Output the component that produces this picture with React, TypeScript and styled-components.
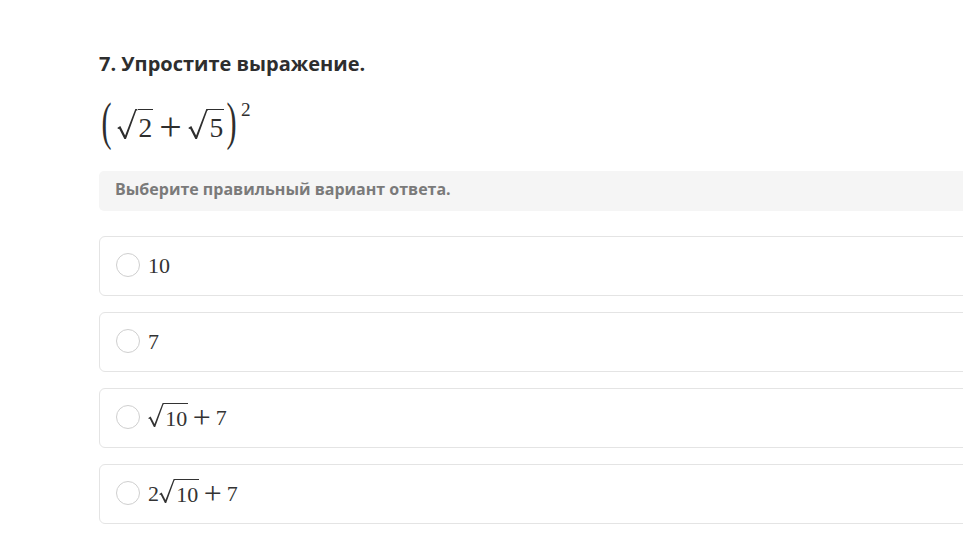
import React from 'react';
import styled, { createGlobalStyle } from 'styled-components';

const GlobalStyle = createGlobalStyle`
  html, body {
    margin: 0;
    padding: 0;
    background: #ffffff;
    overflow: hidden;
  }
  body {
    font-family: 'Open Sans', Lato, sans-serif;
    color: #333333;
  }
`;

// radical sign drawn as a shape, the bar over the radicand is a border
function Sqrt({ children }: { children: React.ReactNode }) {
  return (
    <SqrtWrap>
      <Radical viewBox="0 0 16 22" preserveAspectRatio="none">
        <path d="M0.4 13.6 L2.6 12.3 L6.4 19.2 L14.4 0 L16 0 L16 1.1 L15.2 1.1 L7.0 22 L5.9 22 L1.7 14.4 L0.7 14.6 Z" />
      </Radical>
      <Radicand>{children}</Radicand>
    </SqrtWrap>
  );
}

const App = () => {
  const answers: React.ReactNode[] = [
    <>10</>,
    <>7</>,
    <>
      <Sqrt>10</Sqrt>
      <Op>+</Op>7
    </>,
    <>
      2<Sqrt>10</Sqrt>
      <Op>+</Op>7
    </>,
  ];

  return (
    <>
      <GlobalStyle />
      <Page>
        <Title>7. Упростите выражение.</Title>
        <MathLine>
          <BigParen>(</BigParen>
          <Sqrt>2</Sqrt>
          <Op>+</Op>
          <Sqrt>5</Sqrt>
          <BigParen $right>)</BigParen>
          <Sup>2</Sup>
        </MathLine>
        <Hint>Выберите правильный вариант ответа.</Hint>
        <AnswerList>
          {answers.map((a, i) => (
            <AnswerCard key={i}>
              <Radio />
              <AnswerText>{a}</AnswerText>
            </AnswerCard>
          ))}
        </AnswerList>
      </Page>
    </>
  );
};

export default App;

const Page = styled.div`
  width: 900px;
  padding: 52px 0 0 99px;
`;

const Title = styled.h1`
  margin: 0;
  font-size: 20px;
  line-height: 24px;
  font-weight: 700;
  color: #2e2e2e;
`;

const MathLine = styled.div`
  margin-top: 24px;
  height: 50px;
  font-family: 'Liberation Serif', 'DejaVu Serif', serif;
  font-size: 27.5px;
  line-height: 1;
  color: #2e2e2e;
  white-space: nowrap;
`;

const BigParen = styled.span<{ $right?: boolean }>`
  display: inline-block;
  transform: translateY(-0.24em) scale(1.1, 1.9);
  margin: ${(p) => (p.$right ? '0 5px 0 3px' : '0 6px 0 3px')};
`;

const Op = styled.span`
  font-size: 1.45em;
  vertical-align: -0.08em;
  margin: 0 0.16em;
`;

const Sup = styled.span`
  font-size: 0.7em;
  vertical-align: 1.1em;
`;

const SqrtWrap = styled.span`
  display: inline-flex;
  align-items: flex-start;
`;

const Radical = styled.svg`
  width: 0.74em;
  height: 1.1em;
  fill: currentColor;
  flex-shrink: 0;
`;

const Radicand = styled.span`
  align-self: baseline;
  line-height: 1em;
  padding: 0.16em 0.02em 0 0.04em;
  border-top: 0.05em solid currentColor;
`;

const Hint = styled.div`
  margin-top: 21px;
  height: 40px;
  box-sizing: border-box;
  padding: 8px 16px 0;
  background: #f5f5f5;
  border-radius: 5px;
  font-size: 16px;
  line-height: 20px;
  font-weight: 700;
  color: #7a7a7a;
`;

const AnswerList = styled.div`
  margin-top: 25px;
  display: flex;
  flex-direction: column;
  gap: 16px;
`;

const AnswerCard = styled.div`
  height: 60px;
  box-sizing: border-box;
  border: 1px solid #e4e4e4;
  border-radius: 6px;
  display: flex;
  align-items: center;
  padding: 0 16px;
  gap: 8px;
`;

const Radio = styled.span`
  width: 24px;
  height: 24px;
  box-sizing: border-box;
  border: 1.5px solid #cfcfcf;
  border-radius: 50%;
  flex-shrink: 0;
  margin-top: -2px;
`;

const AnswerText = styled.span`
  display: inline-block;
  font-family: 'Liberation Serif', 'DejaVu Serif', serif;
  font-size: 22px;
  line-height: 1;
  color: #333333;
  white-space: nowrap;
`;
